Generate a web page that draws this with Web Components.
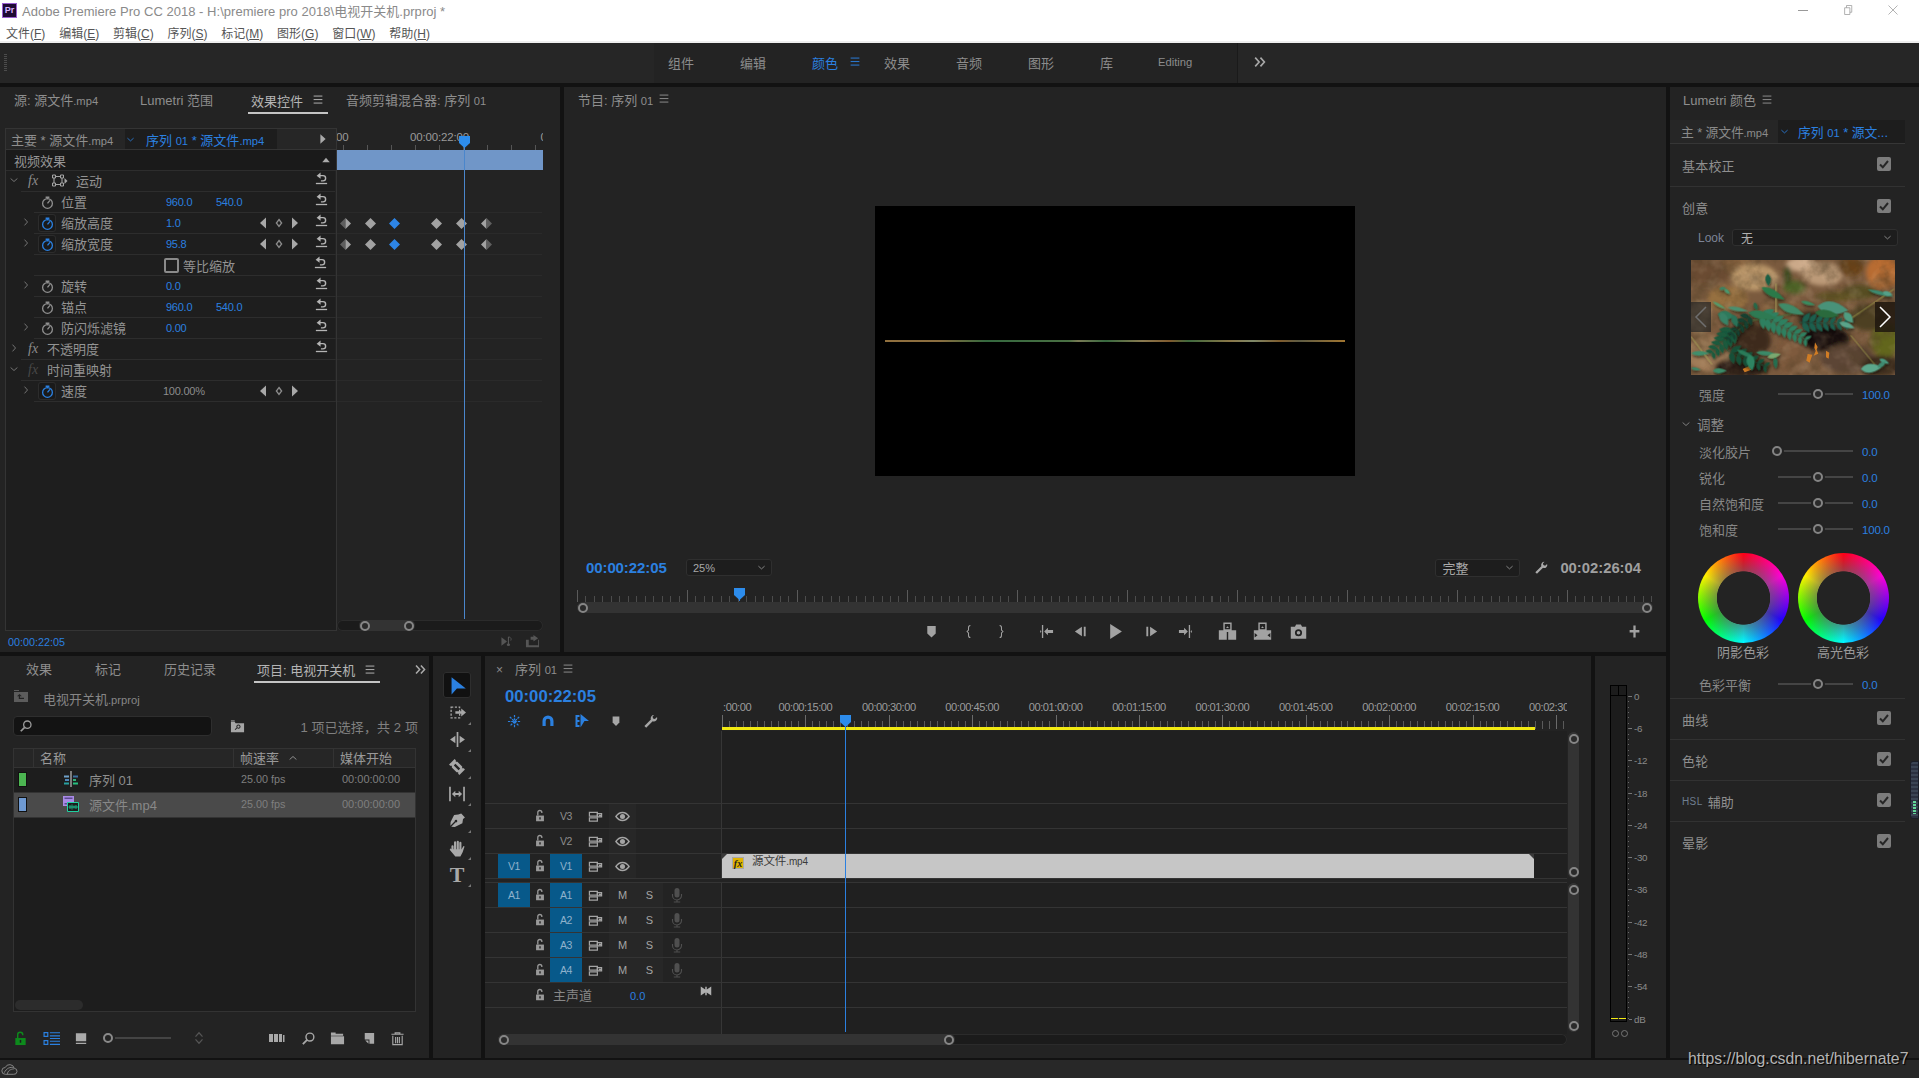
<!doctype html>
<html lang="zh"><head><meta charset="utf-8"><title>Adobe Premiere Pro CC 2018</title>
<style>
html,body{margin:0;height:100%;background:#121212;overflow:hidden;font:13px "Liberation Sans","Noto Sans CJK SC",sans-serif;color:#989898}
</style></head><body><pr-app></pr-app>
<script>
const BLUE='#2b80e0';
const def=(tag,render)=>customElements.define(tag,class extends HTMLElement{
  constructor(){super();this.attachShadow({mode:'open'})}
  connectedCallback(){this.shadowRoot.innerHTML=render(this)}
});
const S='fill="none" stroke="currentColor"';
const sm=s=>`<span style="font-size:11.2px">${s}</span>`;
const ICONS={
 chevR:`<path d="M6 3.5l4 4.5-4 4.5" ${S} stroke-width="1.2"/>`,
 chevD:`<path d="M3.5 6l4.5 4 4.5-4" ${S} stroke-width="1.2"/>`,
 triL:`<path d="M11 2.5v11L5 8z"/>`,triR:`<path d="M5 2.5v11L11 8z"/>`,triU:`<path d="M3 11l5-6 5 6z"/>`,
 dia:`<path d="M8 4l3 4-3 4-3-4z" ${S} stroke-width="1.5"/>`,
 watch:`<circle cx="8" cy="9" r="5.2" ${S} stroke-width="1.4"/><path d="M6 2.4h4M8 2.4v2M8 9l2.6-3.2" ${S} stroke-width="1.4"/>`,
 reset:`<path d="M2.8 6L7 2.6v6.8z"/><path d="M6 6h3.6a2.8 2.8 0 0 1 0 5.6H7.4" ${S} stroke-width="1.5"/><path d="M2 14.4h12" ${S} stroke-width="1.4"/>`,
 xform:`<path d="M3 3.5h8v8H3z" ${S} stroke-width="1.1"/><path d="M1.5 2h3v3h-3zM9.5 2h3v3h-3zM1.5 10h3v3h-3zM9.5 10h3v3h-3z" fill="#232323" stroke="currentColor"/><path d="M13.5 5l3 3-3 3z"/>`,
 marker:`<path d="M3.5 2h9v8l-4.5 4.5L3.5 10z"/>`,
 markIn:`<path d="M10 1.5C8 1.5 8 3 8 4v2.5L6.5 8 8 9.5V12c0 1 0 2.5 2 2.5" ${S} stroke-width="1.1"/>`,
 markOut:`<path d="M6 1.5C8 1.5 8 3 8 4v2.5L9.5 8 8 9.5V12c0 1 0 2.5-2 2.5" ${S} stroke-width="1.1"/>`,
 goOut:`<path d="M1 6.5h5.5V4l4 4-4 4V9.5H1z"/><path d="M11.5 1h1.4v14h-1.4zM13.4 8l1.4-1.6v3.2z"/>`,
 goIn:`<path d="M15 6.5H9.500V4l-4 4 4 4V9.500H15z"/><path d="M4.500 1H3.100v14h1.400zM2.600 8L1.200 6.400v3.200z"/>`,
 stepF:`<path d="M2.500 3h2v10h-2zM6.500 3l7.500 5-7.500 5z"/>`,
 stepB:`<path d="M13.500 3h-2v10h2zM9.500 3L2 8l7.500 5z"/>`,
 play:`<path d="M3 1l11 7-11 7z"/>`,
 insert:`<path fill-rule="evenodd" d="M4.500.5h7v6.500h3.800V15H.7V7h3.800zM5.700 1.700v4.500h4.600V1.700zM7.400 8.400v6.600h1.200V8.400z"/><path d="M6.800 5l1.200-1.400L9.200 5z"/>`,
 over:`<path fill-rule="evenodd" d="M4.500.5h7v6.500h3.800V15H.7V7h3.800zM5.700 1.700v4.500h4.600V1.700zM1.400 9.300v3.800l2.400-1.900zM14.600 9.300v3.800l-2.400-1.900z"/><path d="M6.800 5l1.200-1.400L9.200 5z"/>`,
 camera:`<path fill-rule="evenodd" d="M1.500 4H5l1-2h4l1 2h3.500v10h-13zM8 6a3 3 0 1 0 0 6 3 3 0 0 0 0-6zm0 1.500a1.500 1.500 0 1 1 0 3 1.500 1.500 0 0 1 0-3z"/>`,
 plus:`<path d="M6.800 1.500h2.400V6.500h4V9h-4v5.500H6.800V9h-4V6.500h4z"/>`,
 wrench:`<path d="M11.800 1a3.600 3.600 0 0 0-3.400 4.900L1.500 12.800l1.900 1.900 6.900-6.900A3.600 3.600 0 0 0 15 3.300l-2.300 2-2-.6-.5-2z"/>`,
 select:`<path d="M3 1l12 9.500H7.500L3 15.500z"/>`,
 track:`<path d="M2 3h8v10H2z" ${S} stroke-width="1.2" stroke-dasharray="2 1.500"/><path d="M6 6.800h5.500V4.300L16 8l-4.500 3.700V9.200H6z"/>`,
 ripple:`<path d="M7.200 1h1.600v14H7.200zM1 8l5-3.500v7zM15 8l-5-3.500v7z"/>`,
 razor:`<g transform="rotate(45 8 8)"><path fill-rule="evenodd" d="M1.500 4.500h1.500l1 1 1-1h6l1 1 1-1h1.500v7H13l-1-1-1 1H5l-1-1-1 1H1.500zM5 7v2h6V7z"/></g>`,
 slip:`<path d="M1 1.500h1.500v13H1zM13.500 1.500H15v13h-1.500zM3.500 8L6.500 5.200v2h3v-2L12.500 8l-3 2.800v-2h-3v2z"/>`,
 pen:`<path fill-rule="evenodd" d="M11.500 1.500L15 5.200l-1.800 1.400-.6 4-7.100 3.400-3.400-.1L6.300 9.700a1.200 1.200 0 1 0-.9-.9L1.300 12.900 1.500 9.500l3.300-6.600 4-.5z"/>`,
 hand:`<path d="M4 6.500V10M6.300 3v6.500M8.700 2.500v7M11 3.500v6.500" ${S} stroke-width="1.900" stroke-linecap="round"/><path d="M3.200 9H12l1.800-2.800.9.500-1.700 5L11 15.500H6.500L1.500 9.500l1-1.200z"/>`,
 lockO:`<path d="M3.500 7.500h9V14h-9z"/><path d="M5.500 7.500V4a2.300 2.300 0 0 1 4.600 0v.5" ${S} stroke-width="1.500"/><path d="M7.200 9.500h1.600v2.500H7.200z" fill="#232323"/>`,
 sync:`<path d="M1.500 3.500h8.500v4H1.500zM1.500 9.500h8.500v3.500H1.500z" ${S} stroke-width="1.300"/><path d="M10 5h4.500v3.500H10z" ${S} stroke-width="1.300"/><path d="M11.500 6h2.500v2h-2.500z"/>`,
 eye:`<path d="M1 8c2-3 4.200-4.200 7-4.200S13 5 15 8c-2 3-4.200 4.200-7 4.200S3 11 1 8z" ${S} stroke-width="1.500"/><circle cx="8" cy="8" r="2.700"/>`,
 mic:`<rect x="5.500" y="1" width="5" height="9.500" rx="2.500"/><path d="M3.500 7v1.500a4.500 4.500 0 0 0 9 0V7M8 13v1.500M4.800 15h6.400" ${S} stroke-width="1.100"/>`,
 mix:`<path d="M1 2l6 4V2.200h2V6l6-4v12l-6-4v3.800H7V10l-6 4z"/>`,
 snapNest:`<path d="M8 1v14M3 3l10 10M13 3L3 13M1 8h14" ${S} stroke-width="1.300" stroke-dasharray="2.500 1"/>`,
 magnet:`<path d="M2.500 13V8a5.500 5.500 0 0 1 11 0v5h-3.200V8a2.300 2.300 0 0 0-4.600 0v5z"/>`,
 linked:`<path d="M1.500 2h4v2h-2v3h2v2h-2v3h2v2h-4z"/><path d="M6.500 1L15 8H10.500l-4 6.500z"/>`,
 search:`<circle cx="9.500" cy="6.500" r="4.200" ${S} stroke-width="1.500"/><path d="M6.500 9.500L2 14" ${S} stroke-width="2"/>`,
 binFind:`<path fill-rule="evenodd" d="M1 3h4l1 1.500h9V14H1zM9 6a2.200 2.200 0 0 0-2 3.200L5 11l.8.8 1.900-1.900A2.200 2.200 0 1 0 9 6zm0 1a1.200 1.200 0 1 1 0 2.400A1.200 1.200 0 0 1 9 7z"/><path d="M1 1.500h4V2.500H1z"/>`,
 upbin:`<path d="M1 4h14v10H1z"/><path d="M1 2h5v1H1z"/><path d="M6.500 6L4 8.200h1.800V11H11v-1.200H7V8.200h1.800z" fill="#232323"/>`,
 seq:`<path d="M7.500 0h1v16h-1z" fill="#ddd"/><path d="M1 4.500h5v2H1z" fill="#6ea0c8"/><path d="M10 4.500h5v2h-5z" fill="#3b6fa0"/><path d="M2 8h4v2H2z" fill="#4f86b8"/><path d="M10 8h3v2h-3z" fill="#34b07a"/><path d="M1 11.500h5v2H1z" fill="#28a0a0"/><path d="M10 11.500h5v2h-5z" fill="#27c080"/>`,
 clip:`<path d="M0 0h11v10H0z" fill="#a98ae6"/><path d="M1.500 1.500h8v1.500h-8zM1.500 7h8v1.500h-8z" fill="#5c4a90"/><path d="M4.500 6.500h11v9h-11z" fill="#1d1d1d" stroke="#1fd0a0"/><path d="M7 9v4M9 8.500v5M11 9.500v3M13 9v4M5.500 11h9.500" fill="none" stroke="#1fd0a0" stroke-width=".8"/>`,
 lockG:`<path d="M2.500 7.500h11V15h-11z"/><path d="M5 7.500V4a2.700 2.700 0 0 1 5.400 0v.5" ${S} stroke-width="1.500"/><path d="M7.200 9.500h1.600v3H7.200z" fill="#1d1d1d"/>`,
 list:`<path d="M1 2.500h3.500V6H1zM1 10h3.500v3.500H1z" ${S} stroke-width="1.100"/><path d="M6.500 2.500H16M6.500 5.500H16M6.500 8H16M6.500 10.500H16M6.500 13.500H16" ${S} stroke-width="1"/>`,
 thumbs:`<path d="M2 2.500h11v8.500H2zM2 12.500h11v1.300H2z"/>`,
 sort:`<path d="M4 6.500L8 2l4 4.500M4 9.500L8 14l4-4.500" ${S} stroke-width="1.400"/>`,
 auto:`<path d="M0 4h4v8H0zM5 4h4v8H5zM10 4h3v8h-3zM14 5h1.500v7H14z"/>`,
 bin:`<path d="M1 1.500h5v1.500h8v2H1zM1 5.500h14V14H1z"/>`,
 item:`<path d="M4 2h10v11.500H9V9H4z"/><path d="M4.500 10H8v3.500z"/>`,
 trash:`<path d="M1.500 3.500h13M5.500 3.500V2h5v1.500M3 5v9.500h10V5M6 6.500v6.500M8 6.500v6.500M10 6.500v6.500" ${S} stroke-width="1.200"/>`,
 cloud:`<path d="M4 12.500a3.200 3.200 0 0 1 0-6.400 4.500 4.500 0 0 1 8.500 0.800 2.800 2.800 0 0 1-.5 5.600zM3 11c2-4 6-6 9-4.500M6 12.500c0-3 3-5 6-5" ${S} stroke-width=".9"/>`,
 effOut:`<path d="M1.500 3.500l6 4.500-6 4.500z"/><path d="M9 3v8" ${S} stroke-width="1.200"/><ellipse cx="9" cy="11.500" rx="1.800" ry="1.300"/><path d="M9.500 3c2 .7 3 2 2 4" ${S}/>`,
 export:`<path d="M1 6h3v6h10V6h1v8H1z"/><path d="M6 2h3V0l5 3.500L9 7V5H6z" transform="translate(0 1)"/>`,
 restore:`<path d="M3.500 5h7v9h-7zM6 5V2h7v9h-2.500" ${S} stroke-width="1"/>`,
 closeX:`<path d="M2 2l12 12M14 2L2 14" ${S} stroke-width="1"/>`,
 dbl:`<path d="M2.500 3l4.500 5-4.500 5M8.500 3l4.500 5-4.500 5" ${S} stroke-width="1.900"/>`,
 menu:`<path d="M3 3.500h10M3 7.500h10M3 11.500h10" ${S} stroke-width="1.100"/>`,
};
def('pr-icon',h=>{const s=h.getAttribute('size')||16,c=h.getAttribute('color')||'currentColor';
 return `<style>:host{display:inline-flex;align-items:center;justify-content:center;flex:none;color:${c}}svg{display:block;overflow:visible}</style><svg viewBox="0 0 16 16" width="${s}" height="${s}" fill="currentColor">${ICONS[h.getAttribute('name')]||''}</svg>`});
function spaced(items,start,cell=20){let x=start,out='';items.forEach(([c,html])=>{const w=cell;const m=c-w/2-x;out+=`<span style="flex:none;width:${w}px;margin-left:${m}px;display:flex;justify-content:center;align-items:center">${html}</span>`;x=c+w/2});return out}
const ic=(n,s=16,c='')=>`<pr-icon name="${n}" size="${s}"${c?` color="${c}"`:''}></pr-icon>`;

def('pr-titlebar',()=>`<style>:host{display:block;height:43px;background:#fff;box-sizing:border-box;color:#444}
.t{display:flex;height:20px;margin-bottom:4px;align-items:center}
.logo{width:15px;height:15px;margin:0 5px 0 2px;background:#1f0a33;border:1px solid #9a5fd0;color:#d7b3ff;font:bold 9px/13px "Liberation Sans";text-align:center;box-sizing:border-box}
.n{color:#8a8a8a;font-size:13px;letter-spacing:.03px;margin-top:1px}
.w{margin-left:auto;display:flex;color:#9a9a9a;align-items:center;padding-right:20px;gap:33.500px}
.m{display:flex;height:17px;align-items:center;padding-left:6px;font-size:12px;color:#555;box-shadow:0 2px 0 #eee}
.m span{margin-right:13.800px}u{text-underline-offset:1px}</style>
<div class="t"><div class="logo">Pr</div><div class="n">Adobe Premiere Pro CC 2018 - H:\\premiere pro 2018\\电视开关机.prproj *</div>
<div class="w"><span style="width:10px;height:1px;background:#999"></span><pr-icon name="restore" size="12"></pr-icon><pr-icon name="closeX" size="12"></pr-icon></div></div>
<div class="m"><span>文件(<u>F</u>)</span><span>编辑(<u>E</u>)</span><span>剪辑(<u>C</u>)</span><span>序列(<u>S</u>)</span><span>标记(<u>M</u>)</span><span>图形(<u>G</u>)</span><span>窗口(<u>W</u>)</span><span>帮助(<u>H</u>)</span></div>`);

def('pr-workspaces',()=>{const it=['组件','编辑','颜色','效果','音频','图形','库','Editing'];
return `<style>:host{display:flex;height:40px;background:#262626;align-items:center}
.g{width:3px;height:18px;margin-left:4px;background:repeating-linear-gradient(#4c4c4c 0 1px,transparent 1px 2px)}
.n{margin-left:647px;width:584px;height:40px;background:#232323;display:flex;align-items:center;border-right:1px solid #1a1a1a;color:#8c8c8c;box-sizing:border-box}
.n span{width:72px;flex:none;padding-left:14px;box-sizing:border-box;display:flex;align-items:center;white-space:nowrap;margin-top:-2px}
.n .on{color:${BLUE}}.d{margin-left:15px;color:#a8a8a8}.n .e{font-size:11.200px;padding-left:0}</style>
<div class="g"></div><div class="n">${it.map(t=>`<span class="${t=='颜色'?'on':''} ${t=='Editing'?'e':''}">${t}${t=='颜色'?`<pr-icon name="menu" size="14" style="margin-left:10px"></pr-icon>`:''}</span>`).join('')}</div><div class="d">${ic('dbl',14)}</div>`});

def('pr-tab',h=>{const on=h.hasAttribute('active');return `<style>:host{display:flex;width:${h.getAttribute('w')}px;flex:none;height:100%;align-items:center;white-space:nowrap;color:${on?'#b4b4b4':'#8e8e8e'}}
.i{display:flex;align-items:center;height:25px;padding:0 3px 2px;box-sizing:border-box;${on?'border-bottom:2px solid #c4c4c4;padding-bottom:0;margin-top:2px':''}}
pr-icon{margin-left:${on?8:4}px}</style><div class="i"><span><slot></slot></span>${on||h.hasAttribute('menu')?`<pr-icon name="menu" size="14"></pr-icon>`:''}</div>`});

def('pr-playhead',h=>`<style>:host{display:block;position:absolute;width:11px;pointer-events:none}
.l{position:absolute;left:5px;top:6px;bottom:0;width:1px;background:${h.getAttribute('color')||BLUE}}svg{position:absolute;left:0;top:0;display:block}</style>
<div class="l"></div><svg width="11" height="${h.getAttribute('hh')||12}" viewBox="0 0 11 12"><path d="M0 0h11v7l-5.500 5L0 7z" fill="#2d8ceb"/></svg>`);

def('pr-scroll',h=>{const v=h.getAttribute('dir')=='v',f=h.getAttribute('from')||0,w=h.getAttribute('w')||'100%';
return `<style>:host{display:flex;flex:none;${v?'flex-direction:column;width:11px':'height:11px'};background:#1b1b1b;border-radius:6px;box-shadow:inset 0 0 0 1px #2b2b2b}
.s{flex:none;${v?`height:${f}px`:`width:${f}px`}}
.t{flex:none;${v?`height:${w};width:100%`:`width:${w}${w.includes('%')?'':'px'};height:100%`};background:#333;position:relative;border-radius:6px}
i{position:absolute;width:10px;height:10px;box-sizing:border-box;border:2.500px solid #868686;border-radius:50%;background:#2a2a2a;${v?'left:.5px':'top:.5px'}}
.a{${v?'top:2px':'left:1px'}}.b{${v?'bottom:1px':'right:1px'}}</style><div class="s"></div><div class="t"><i class="a"></i><i class="b"></i></div>`});

def('pr-keyframes',h=>{const P={n:'<path d="M5 0l5 5-5 5-5-5z" fill="#a2a2a2"/>',b:'<path d="M5 0l5 5-5 5-5-5z" fill="#2d85e6"/>',h:'<path d="M5 0v10L0 5z" fill="#5e5e5e"/><path d="M5 0l5 5-5 5z" fill="#a2a2a2"/>',r:'<path d="M5 0v10L0 5z" fill="#a2a2a2"/><path d="M5 0l5 5-5 5z" fill="#5e5e5e"/>'};
return `<style>:host{position:absolute;inset:0;display:block}svg{position:absolute;top:5px}</style>`+h.getAttribute('k').split(',').map(k=>{const [x,t]=k.split(':');return `<svg width="11" height="11" viewBox="0 0 10 10" style="left:${x-5.5}px">${P[t||'n']}</svg>`}).join('')});

def('pr-prop',h=>{const g=n=>h.getAttribute(n),tw=h.hasAttribute('twirl'),act=h.hasAttribute('on'),nav=h.hasAttribute('nav');
return `<style>:host{display:flex;height:21px;flex:none}
.l{width:330px;flex:none;display:flex;align-items:center;height:21px;padding-left:13px;box-sizing:border-box}
.c{border-bottom:1px solid #2d2d2d;display:flex;align-items:center;height:21px;box-sizing:border-box;flex:1}
.tw{width:16px;flex:none;display:flex;justify-content:center;color:#7d7d7d;margin-top:-3px}
.sw{margin-left:4px;width:18px;height:18px;flex:none;display:flex;align-items:center;justify-content:center;color:#8f8f8f;${act?`color:${BLUE};background:#1a1a1a;border-radius:3px;box-shadow:inset 0 0 0 1px #2c2c2c;`:''}margin-right:5px}
.n{width:105px;flex:none;color:#939393;white-space:nowrap;margin-top:-1px}
.v{flex:none;font-size:11px;letter-spacing:-.25px;color:${BLUE}}.v1{width:50px}.v2{width:39px}
.nav{width:48px;display:flex;flex:none;color:#a8a8a8}.nav pr-icon{width:16px}
.r{margin-left:10.500px;width:17px;flex:none;color:#b4b4b4;margin-top:-4px}
.rc{width:207px;flex:none;position:relative;border-bottom:1px solid #2a2a2a;box-sizing:border-box;height:21px;background:#232323}
.bx{display:flex;align-items:center;margin-left:-1px;color:#939393;font-size:13px;white-space:nowrap}.bx i{width:11px;height:11px;border:2px solid #8a8a8a;border-radius:2px;margin-right:4px;margin-left:-1px}</style>
<div class="l"><div class="tw">${tw?ic('chevR',12):''}</div><div class="c">
<div class="sw">${g('label')?ic('watch',15):''}</div><div class="n">${g('label')||''}</div>
${g('check')?`<div class="bx" style="width:89px"><i></i>${g('check')}</div>`:`<div class="v v1" ${g('gray')!==null?'style="color:#8c8c8c;margin-left:-3px;width:53px"':''}>${g('v1')||''}</div><div class="v v2">${g('v2')||''}</div>`}
<div class="nav">${nav?ic('triL',16)+ic('dia',14,'#8c8c8c')+ic('triR',16):''}</div>
${g('noreset')===null?`<div class="r">${ic('reset',15)}</div>`:'<div class="r"></div>'}</div></div>
<div class="rc"><slot></slot></div>`});

def('pr-effect',h=>{const g=n=>h.getAttribute(n),open=h.hasAttribute('open'),dim=h.hasAttribute('dim');
return `<style>:host{display:flex;height:21px;flex:none}
.l{width:330px;flex:none;display:flex;align-items:center;height:21px;padding-left:1px;box-sizing:border-box}
.tw{width:15px;flex:none;display:flex;justify-content:center;color:#7d7d7d;margin-top:-3px}
.c{flex:1;display:flex;align-items:center;height:21px;border-bottom:1px solid #2d2d2d;box-sizing:border-box}
.fx{width:26px;flex:none;padding-left:7px;box-sizing:border-box;font:italic 14px "Liberation Serif",serif;color:${dim?'#484848':'#8c8c8c'}}
.n{color:#939393;white-space:nowrap;flex:1;margin-top:-1px}.r{width:17px;flex:none;margin-right:4px;color:#b4b4b4;margin-top:-4px}
.ic{display:flex;margin:0 9px 0 4px;color:#a4a4a4}
.rc{width:207px;flex:none;border-bottom:1px solid ${h.hasAttribute('noline')?'transparent':'#2a2a2a'};box-sizing:border-box;height:21px;background:#232323}</style>
<div class="l"><div class="tw">${ic(open?'chevD':'chevR',12)}</div><div class="c"><div class="fx">fx</div>${h.hasAttribute('xform')?`<div class="ic">${ic('xform',16)}</div>`:''}<div class="n">${g('label')}</div>${h.hasAttribute('noreset')?'':`<div class="r">${ic('reset',15)}</div>`}</div></div><div class="rc"></div>`});

def('pr-effect-controls',()=>`<style>:host{display:flex;flex-direction:column;width:560px;flex:none;background:#232323}
.tabs{height:26px;display:flex;padding-left:11px;flex:none}
.f{margin:15px 17px 0 5px;flex:1;position:relative;display:flex;flex-direction:column;min-height:0;background:linear-gradient(90deg,#1e1e1e 0 331px,#232323 331px)}
.f:before{content:"";position:absolute;left:0;top:0;bottom:0;width:330px;border:1px solid #343434;pointer-events:none;z-index:2}
.h1{display:flex;height:22px;flex:none}
.hl{width:331px;flex:none;display:flex;align-items:center;background:#262626;box-sizing:border-box;padding-left:6px;border-top:1px solid #343434;border-bottom:1px solid #343434;white-space:nowrap;color:#8e8e8e}
.hl span.t{margin-top:-2px}
.hl .a{width:114px;flex:none}.hl .b{display:flex;align-items:center;background:#1d1d1d;height:20px;width:152px;flex:none;color:${BLUE}}
.hr{flex:1;position:relative;font-size:11.500px;letter-spacing:-.15px;color:#9a9a9a;display:flex;justify-content:space-between;padding-top:3px;overflow:hidden;background:repeating-linear-gradient(90deg,#555 0 1px,transparent 1px 24px) 7px 100%/100% 5px no-repeat}
.hr span:nth-child(2){margin-left:-10px}.hr span:last-child{margin-right:-10px}
.h2{display:flex;height:21px;flex:none}
.h2l{width:331px;flex:none;background:#1a1a1a;display:flex;align-items:center;padding-left:9px;box-sizing:border-box;border-bottom:1px solid #2d2d2d;color:#969696}
.h2l pr-icon{margin-left:auto;margin-right:4px;color:#aaa}
.h2r{flex:1;background:#7096c8;margin-bottom:1px}
.rows{display:flex;flex-direction:column;flex:1}
.sb{position:absolute;left:332px;right:0;bottom:0}
.foot{height:21px;display:flex;align-items:center;padding-left:8px;flex:none;font-size:10.800px;color:${BLUE};padding-right:20px}
.foot pr-icon{color:#555}</style>
<div class="tabs"><pr-tab w="126">源: 源文件${sm('.mp4')}</pr-tab><pr-tab w="111">Lumetri 范围</pr-tab><pr-tab w="95" active>效果控件</pr-tab><pr-tab w="180">音频剪辑混合器: 序列 ${sm('01')}</pr-tab></div>
<div class="f">
 <div class="h1"><div class="hl"><div class="a"><span class="t">主要 * 源文件${sm('.mp4')}</span></div><div class="b">${ic('chevD',11)}<span style="margin-left:10px">序列 ${sm('01')} * 源文件${sm('.mp4')}</span></div><pr-icon name="triR" size="14" color="#aaa" style="margin-left:39px"></pr-icon></div><div class="hr"><span>00</span><span>00:00:22:00</span><span>00</span></div></div>
 <div class="h2"><div class="h2l">视频效果<pr-icon name="triU" size="12"></pr-icon></div><div class="h2r"></div></div>
 <div class="rows">
 <pr-effect label="运动" open xform noline></pr-effect>
 <pr-prop label="位置" v1="960.0" v2="540.0"></pr-prop>
 <pr-prop label="缩放高度" v1="1.0" twirl on nav><pr-keyframes k="10:h,35,59:b,101.500,126.500,151:r"></pr-keyframes></pr-prop>
 <pr-prop label="缩放宽度" v1="95.8" twirl on nav><pr-keyframes k="10:h,35,59:b,101.500,126.500,151:r"></pr-keyframes></pr-prop>
 <pr-prop check="等比缩放"></pr-prop>
 <pr-prop label="旋转" v1="0.0" twirl></pr-prop>
 <pr-prop label="锚点" v1="960.0" v2="540.0"></pr-prop>
 <pr-prop label="防闪烁滤镜" v1="0.00" twirl></pr-prop>
 <pr-effect label="不透明度"></pr-effect>
 <pr-effect label="时间重映射" open dim noreset></pr-effect>
 <pr-prop label="速度" v1="100.00%" gray twirl on nav noreset></pr-prop>
 </div>
 <pr-scroll class="sb" from="22" w="56"></pr-scroll>
 <pr-playhead color="#4a86cc" style="left:454px;top:8px;bottom:12px"></pr-playhead>
</div>
<div class="foot">00:00:22:05<span style="flex:1"></span>${ic('effOut',15)}<span style="width:10px"></span>${ic('export',15)}</div>`);

def('pr-select',h=>`<style>:host{display:flex;align-items:center;width:${h.getAttribute('w')}px;height:${h.getAttribute('h')||17}px;background:#1d1d1d;border:1px solid #2f2f2f;border-radius:3px;box-sizing:border-box;padding:0 4px 0 ${h.getAttribute('pad')||6}px;flex:none;color:#a8a8a8}
pr-icon{margin-left:auto;color:#999}</style><slot></slot>${ic('chevD',11)}`);

def('pr-program',()=>{
const btns=[[931,'marker'],[968,'markIn'],[1001,'markOut'],[1046,'goIn'],[1080,'stepB'],[1115,'play'],[1151,'stepF'],[1185,'goOut'],[1227,'insert'],[1262,'over'],[1298,'camera'],[1634,'plus']];
return `<style>:host{display:flex;flex-direction:column;flex:1;background:#232323;min-width:0}
.tabs{height:26px;display:flex;padding-left:11px;flex:none}
.v{width:480px;height:270px;background:#000;align-self:center;margin-top:93px;display:flex;flex-direction:column;justify-content:center;flex:none}
.v i{display:block;height:2px;margin:0 10px;background:linear-gradient(90deg,#91703e,#8a6e40 12%,#35693f 22%,#4a7043 40%,#7a7a55 42%,#37693f 48%,#8a7a50 56%,#7f5a2e 62%,#3f6a3e 66%,#8a7748 75%,#7e8868 80%,#7f5c2d 86%,#5e5c44 90%,#a07530)}
.c{display:flex;align-items:center;height:17px;margin-top:83px;padding:0 25px 0 22px;flex:none}
.tc{width:100px;flex:none;color:${BLUE};font-weight:bold;font-size:15px;letter-spacing:-.1px}
.e{color:#a0a0a0;font-weight:bold;font-size:14.800px;margin-left:12px}
.w{margin-left:14px;color:#aaa;width:14px}
.r{height:14px;margin:12px 13px 0;flex:none;position:relative;background:repeating-linear-gradient(90deg,#5a5a5a 0 1px,transparent 1px 110px) 0 2px/100% 12px no-repeat,repeating-linear-gradient(90deg,#4c4c4c 0 1px,transparent 1px 8.460px) 0 8px/100% 6px no-repeat}
.s{margin:0 13px;flex:none}
.b{display:flex;align-items:center;height:24px;margin-top:6px;color:#a2a2a2}</style>
<div class="tabs"><pr-tab w="200" menu>节目: 序列 ${sm('01')}</pr-tab></div>
<div class="v"><i></i></div>
<div class="c"><div class="tc">00:00:22:05</div><pr-select w="86" h="17"><span style="font-size:11px">25%</span></pr-select><span style="flex:1"></span><pr-select w="85" h="18"><span>完整</span></pr-select><pr-icon class="w" name="wrench" size="14"></pr-icon><div class="e">00:02:26:04</div></div>
<div class="r"><pr-playhead style="left:156.500px;top:0;height:13px" hh="12"></pr-playhead></div>
<pr-scroll class="s"></pr-scroll>
<div class="b">${spaced(btns.map(([c,n])=>[c,ic(n,n=='play'?17:n=='insert'||n=='over'||n=='camera'?19:15)]),564)}</div>`});

def('pr-tools',()=>{const T=[['select',19,BLUE],['track',17],['ripple',17],['razor',18],['slip',18],['pen',17],['hand',18],['T',0]];
return `<style>:host{display:flex;flex-direction:column;width:48px;flex:none;background:#232323;padding-top:16px;box-sizing:border-box;color:#a8a8a8}
.t{height:27px;display:flex;justify-content:center;align-items:center;position:relative;flex:none}
.t:after{content:"";position:absolute;right:10px;bottom:1px;border:solid transparent;border-width:0 0 3px 3px;border-bottom-color:#777}
.t.on{background:#111;border-radius:3px;margin:0 10px;height:26px;margin-bottom:1px;box-shadow:inset 0 0 0 1px #2e2e2e}.t.on:after{display:none}
.x{font:bold 22px/1 "Liberation Serif",serif;color:#a8a8a8}</style>${T.map(([n,s,c],i)=>`<div class="t ${i==0?'on':''}">${n=='T'?'<span class="x">T</span>':ic(n,s,c||'')}</div>`).join('')}`});

def('pr-track',h=>{const g=n=>h.getAttribute(n),A=h.hasAttribute('audio'),M=h.hasAttribute('master');
const p=(t,on)=>`<div class="p ${on?'on':''}">${t}</div>`;
return `<style>:host{display:flex;height:25px;flex:none;box-sizing:border-box}
.hd{width:237px;flex:none;display:flex;align-items:center;box-sizing:border-box;border-right:1px solid #363636;border-bottom:1px solid #343434;padding-left:13px;background:#232323;color:#a0a0a0}
.p{width:32px;height:24px;flex:none;display:flex;align-items:center;justify-content:center;font-size:10.500px;color:#8e8e8e;letter-spacing:-.3px}
.p.on{background:#07598a;color:#8fb2cc}
.l{width:20px;flex:none;display:flex;justify-content:center;color:#999}
.i{width:27px;height:24px;flex:none;display:flex;justify-content:center;align-items:center;color:#a4a4a4;font-size:11px}
.i.d{background:#272727}.m{color:#4f4f4f}
.lane{flex:1;border-bottom:1px solid #343434;box-sizing:border-box;background:#202020;min-width:0;display:flex}
.clip{width:812px;height:24px;flex:none;background:#c6c6c6;position:relative;color:#3a3a3a;display:flex;align-items:flex-start;padding-left:10px;box-sizing:border-box}
.clip:before{content:"";position:absolute;left:0;top:0;width:0;height:0;border-top:5px solid #3a3a3a;border-right:5px solid transparent}
.clip:after{content:"";position:absolute;right:0;top:0;width:0;height:0;border-top:5px solid #3a3a3a;border-left:5px solid transparent}
.fx{width:12px;height:12px;background:#e1b400;border:1px solid #a8a8a8;font:italic bold 10px/11px "Liberation Serif",serif;text-align:center;color:#222;margin:3px 8px 0 0;flex:none;box-sizing:border-box}
.cn{line-height:14px;font-size:11.500px;white-space:nowrap;letter-spacing:-.1px}
.mn{color:#888;white-space:nowrap;width:62px;flex:none;margin-left:3px;font-size:13px;margin-top:-1px}
.mv{color:${BLUE};font-size:11px;width:70px;flex:none;margin-top:2px}</style>
<div class="hd">${M?`<div class="p"></div><div class="l">${ic('lockO',14)}</div><div class="mn">主声道</div><div class="mv" style="margin-left:15px">0.0</div><pr-icon name="mix" size="12" color="#b0b0b0" style="margin-top:-8px"></pr-icon>`:
`${p(g('src')||'',!!g('src'))}<div class="l">${ic('lockO',14)}</div>${p(g('name'),A||h.hasAttribute('target'))}<div class="i">${ic('sync',15)}</div>${A?`<div class="i d">M</div><div class="i d">S</div><div class="i m">${ic('mic',16)}</div>`:`<div class="i d">${ic('eye',15)}</div>`}`}</div>
<div class="lane">${h.hasAttribute('clip')?`<div class="clip"><span class="fx">fx</span><span class="cn">源文件<span style="font-size:10px">.mp4</span></span></div>`:''}</div>`});

def('pr-timeline',()=>{
const L=[':00:00','00:00:15:00','00:00:30:00','00:00:45:00','00:01:00:00','00:01:15:00','00:01:30:00','00:01:45:00','00:02:00:00','00:02:15:00','00:02:30:00'];
return `<style>:host{display:flex;flex-direction:column;flex:1;min-width:0;background:#232323;position:relative}
.tabs{height:27px;display:flex;align-items:center;padding-left:11px;flex:none;color:#a6a6a6}
.x{width:13px;color:#8a8a8a;font-size:12px;margin-right:3px}
.head{display:flex;height:48px;flex:none}
.hl{width:237px;flex:none;padding-left:20px;box-sizing:border-box}
.tc{color:${BLUE};font-weight:bold;font-size:16.700px;line-height:18px;margin-top:5px}
.ti{display:flex;align-items:center;height:22px;margin-top:4px}
.ru{width:845px;flex:none;position:relative;height:48px;overflow:hidden;background:repeating-linear-gradient(90deg,#6a6a6a 0 1px,transparent 1px 83.400px) 0 32px/100% 14px no-repeat,repeating-linear-gradient(90deg,#5a5a5a 0 1px,transparent 1px 6.950px) 0 38px/100% 8px no-repeat}
.lb{display:flex;margin-left:-41.700px;font-size:11.100px;letter-spacing:-.45px;color:#9c9c9c;padding-top:18px;width:1000px}
.lb span{width:83.400px;flex:none;text-align:center;white-space:nowrap}.lb span:first-child{text-align:right;padding-right:12.500px;box-sizing:border-box}
.y{position:absolute;left:0;top:44px;width:813px;height:2.500px;background:#f2ea12}
.body{flex:1;display:flex;min-height:0}
.tr{width:1082px;flex:none;display:flex;flex-direction:column}
.sp{display:flex;height:73px;flex:none}.sp .a,.end .a{width:237px;border-right:1px solid #363636;box-sizing:border-box;flex:none}.sp .a{border-bottom:1px solid #343434}
.sp .b{flex:1;border-bottom:1px solid #343434;background:#202020}
.gap{display:flex;height:4px;flex:none;border-bottom:1px solid #343434;box-sizing:border-box;background:#232323}
.end{display:flex;flex:1}.end .b{flex:1;background:#202020}
.vs{width:11px;flex:none;margin-left:1px;display:flex;flex-direction:column;gap:5px;padding-top:1px}
.bt{display:flex;height:24px;flex:none;padding:0 0 13px 13px;box-sizing:border-box}
.bt pr-scroll{width:1069px}</style>
<div class="tabs"><span class="x">×</span><pr-tab w="80" menu>序列 ${sm('01')}</pr-tab></div>
<div class="head"><div class="hl"><div class="tc">00:00:22:05</div><div class="ti" style="margin-left:-20px;color:${BLUE}">${spaced([[29,ic('snapNest',15)],[63,ic('magnet',16)],[97,ic('linked',16)],[131,ic('marker',12,'#a6a6a6')],[165,ic('wrench',15,'#a6a6a6')]],0)}</div></div>
<div class="ru"><div class="lb">${L.map(t=>`<span>${t}</span>`).join('')}</div><div class="y"></div></div></div>
<div class="body"><div class="tr"><div class="sp"><div class="a"></div><div class="b"></div></div>
<pr-track name="V3"></pr-track><pr-track name="V2"></pr-track><pr-track name="V1" src="V1" target clip></pr-track><div class="gap"></div>
<pr-track audio name="A1" src="A1"></pr-track><pr-track audio name="A2"></pr-track><pr-track audio name="A3"></pr-track><pr-track audio name="A4"></pr-track><pr-track master></pr-track>
<div class="end"><div class="a"></div><div class="b"></div></div></div>
<div class="vs"><pr-scroll dir="v" style="height:146px"></pr-scroll><pr-scroll dir="v" style="height:149px"></pr-scroll></div></div>
<div class="bt"><pr-scroll w="457"></pr-scroll></div>
<pr-playhead style="left:355px;top:59px;height:317px"></pr-playhead>`});

def('pr-meter',()=>{const L=['0','-6','-12','-18','-24','-30','-36','-42','-48','-54','dB'];
return `<style>:host{display:flex;flex-direction:column;width:71px;flex:none;background:#232323;padding:29px 0 0 15px;box-sizing:border-box}
.r{display:flex;height:337px;flex:none}
.b{width:17px;flex:none;border:1px solid #000;background:#1c1c1c;box-sizing:border-box;display:flex;flex-direction:column}
.top{height:9px;border-bottom:1px solid #000;display:flex;flex:none}.top i{flex:1}.top i:first-child{border-right:1px solid #000}
.yl{margin-top:auto;height:1.500px;margin-bottom:2px;background:linear-gradient(90deg,#f2ea12 0 45%,#333 45% 55%,#f2ea12 55%)}
.tk{width:5px;flex:none;background:repeating-linear-gradient(#6a6a6a 0 1px,transparent 1px 5.370px) 1px 11px/1px 100% no-repeat}
.lb{display:flex;flex-direction:column;margin-top:-5px;font-size:9.800px;color:#8a8a8a;letter-spacing:-.3px}
.lb span{height:32.300px;flex:none;display:flex;align-items:center;white-space:nowrap;margin-left:-3px}
.lb span:before{content:"";width:3px;height:1px;background:#777;margin-right:2px}
.oo{display:flex;gap:2px;margin:8px 0 0 2px}.oo i{width:5px;height:5px;border:1px solid #777;border-radius:50%}</style>
<div class="r"><div class="b"><div class="top"><i></i><i></i></div><div class="yl"></div></div><div class="tk"></div><div class="lb">${L.map(t=>`<span>${t}</span>`).join('')}</div></div><div class="oo"><i></i><i></i></div>`});

def('pr-bin-row',h=>{const sel=h.hasAttribute('selected');return `<style>:host{display:grid;grid-template-columns:20px 200px 100px 1fr;height:25px;flex:none;align-items:center;background:${sel?'#4a4a4a':'#1d1d1d'};box-sizing:border-box;border-bottom:1px solid #333;color:#7f7f7f;font-size:10.800px}
.sw{width:7px;height:13px;background:${h.getAttribute('color')};border:1px solid #111;margin-left:4px;margin-top:-2px}
.n{display:flex;align-items:center;font-size:13px;color:${sel?'#888':'#8e8e8e'};padding-left:29px;white-space:nowrap;margin-top:-2px}.n pr-icon{margin-right:10px}
.f{padding-left:7px;margin-top:-2px}.t{padding-left:8px;font-size:11px;margin-top:-3px}</style>
<div class="sw"></div><div class="n">${ic(h.getAttribute('icon'),16)}<span>${h.getAttribute('label')}</span></div><div class="f">25.00 fps</div><div class="t">00:00:00:00</div>`});

def('pr-project',()=>{
const F=[[20,ic('lockG',15,'#0d8a1c')],[51,ic('list',17,BLUE)],[81,ic('thumbs',15,'#aaa')]];
const G=[[199,ic('sort',14,'#555')],[277,ic('auto',16,'#a8a8a8')],[308,ic('search',15,'#a8a8a8')],[337,ic('bin',15,'#a8a8a8')],[368,ic('item',15,'#a8a8a8')],[397,ic('trash',15,'#a8a8a8')]];
return `<style>:host{display:flex;flex-direction:column;width:429px;flex:none;background:#232323}
.tabs{height:27px;display:flex;padding-left:23px;flex:none}
.d{margin-left:2px;color:#aaa;display:flex;align-items:center}
.pa{height:29px;display:flex;align-items:center;padding-left:13px;flex:none;color:#868686}
.pa .tx{margin-top:2px}
.pa span.ic{width:30px;flex:none;color:#5c5c5c}
.se{display:flex;align-items:center;height:20px;margin-top:4px;padding-left:13px;flex:none}
.sb{width:199px;height:20px;flex:none;background:#131313;border:1px solid #2e2e2e;border-radius:4px;box-sizing:border-box;display:flex;align-items:center;padding-left:5px;color:#9a9a9a}
.cnt{margin-left:auto;margin-right:11px;color:#808080;white-space:nowrap;letter-spacing:.1px}
.tb{margin:12px 0 0 13px;width:403px;height:264px;flex:none;border:1px solid #333;box-sizing:border-box;background:#1d1d1d;display:flex;flex-direction:column;position:relative}
.th{display:grid;grid-template-columns:20px 200px 100px 1fr;height:19px;flex:none;background:#262626;border-bottom:1px solid #333;color:#999;box-sizing:border-box;align-items:center}
.th div{height:100%;border-right:1px solid #333;display:flex;align-items:center;padding-left:6px;box-sizing:border-box;white-space:nowrap;margin-top:-1px}.th div:last-child{border:0}
.thumb{margin:auto 0 1px 1px;width:68px;height:10px;background:#2c2c2c;border-radius:5px;flex:none}
.ft{height:40px;flex:none;display:flex;align-items:center;margin-top:6px;color:#aaa}
.sl{width:68px;flex:none;display:flex;align-items:center;margin-left:12px}.sl i{width:10px;height:10px;box-sizing:border-box;border:2.500px solid #8a8a8a;border-radius:50%;flex:none}.sl b{flex:1;height:2px;background:#444;margin-left:2px}</style>
<div class="tabs"><pr-tab w="69">效果</pr-tab><pr-tab w="69">标记</pr-tab><pr-tab w="93">历史记录</pr-tab><pr-tab w="158" active>项目: 电视开关机</pr-tab><span class="d">${ic('dbl',13)}</span></div>
<div class="pa"><span class="ic">${ic('upbin',16)}</span><span class="tx">电视开关机${sm('.prproj')}</span></div>
<div class="se"><div class="sb">${ic('search',14)}</div><pr-icon name="binFind" size="15" color="#a6a6a6" style="margin-left:18px"></pr-icon><div class="cnt">1 项已选择，共 2 项</div></div>
<div class="tb"><div class="th"><div></div><div>名称</div><div>帧速率<pr-icon name="chevD" size="12" style="transform:scaleY(-1);margin-left:8px"></pr-icon></div><div>媒体开始</div></div>
<pr-bin-row color="#4cb551" icon="seq" label="序列 01"></pr-bin-row><pr-bin-row selected color="#6f9ad2" icon="clip" label="源文件.mp4"></pr-bin-row><div class="thumb"></div></div>
<div class="ft">${spaced(F,0)}<div class="sl"><i></i><b></b></div>${spaced(G,171)}</div>`});

def('pr-check',()=>`<style>:host{display:block;width:14px;height:14px;flex:none}svg{display:block}</style><svg width="14" height="14" viewBox="0 0 14 14"><rect width="14" height="14" rx="2" fill="#7c7c7c"/><path d="M3 7.500l2.800 2.800L11 4" fill="none" stroke="#262626" stroke-width="2"/></svg>`);

def('pr-lsec',h=>`<style>:host{display:flex;align-items:center;height:${h.getAttribute('h')||41}px;box-sizing:border-box;padding-left:12px;${h.hasAttribute('noline')?'':'border-bottom:1px solid #323232;'}margin-right:14px;flex:none;color:#8f8f8f;letter-spacing:.2px}
pr-check{margin-left:auto;margin-right:14px;margin-top:-3px}
.h{font-size:10px;color:#6f7f90;letter-spacing:.4px;margin-right:5px}</style>${h.hasAttribute('hsl')?'<span class="h">HSL</span>':''}<slot></slot><pr-check></pr-check>`);

def('pr-lslider',h=>{const g=n=>h.getAttribute(n),p=g('pos')||53;return `<style>:host{display:flex;align-items:center;height:26px;padding-left:29px;flex:none;color:#878787}
.n{width:79px;flex:none;white-space:nowrap}
.t{width:75px;height:2px;background:#454545;position:relative;flex:none}
.t i{position:absolute;left:${p}%;top:1px;transform:translate(-50%,-50%);width:10px;height:10px;box-sizing:border-box;border:2.500px solid #848484;border-radius:50%;background:#2a2a2a;box-shadow:0 0 0 2px #232323}
.v{margin-left:9px;color:${BLUE};font-size:11.500px;letter-spacing:-.2px;margin-top:2px}</style><div class="n">${g('label')}</div><div class="t"><i></i></div><div class="v">${g('value')}</div>`});

def('pr-wheel',h=>`<style>:host{display:flex;flex-direction:column;align-items:center;width:100px;flex:none;color:#999}
.w{width:91px;height:90px;border-radius:50%;background:radial-gradient(circle,#232323 0 26.300px,rgba(96,96,96,.6) 27px,rgba(96,96,96,0) 44px),conic-gradient(#ff0018,#ff00d8 60deg,#2000ff 120deg,#00f8ff 180deg,#00ff00 240deg,#fff000 300deg,#ff0018);flex:none}
span{margin-top:1px;line-height:18px}</style><div class="w"></div><span>${h.getAttribute('label')}</span>`);

def('pr-look',()=>{
 const leaf=(x,y,a,l,w,c)=>`<path d="M0 0Q${l*.35} ${-w*1.6} ${l} 0Q${l*.35} ${w*1.6} 0 0z" transform="translate(${x} ${y}) rotate(${a})" fill="${c}"/>`;
 const fern=(x0,y0,x1,y1,n,l,c)=>{let o=`<path d="M${x0} ${y0}L${x1} ${y1}" stroke="${c}" stroke-width="2"/>`;const ang=Math.atan2(y1-y0,x1-x0)*180/Math.PI;for(let i=0;i<n;i++){const t=(i+.5)/n,x=x0+(x1-x0)*t,y=y0+(y1-y0)*t,k=1-t*.5;o+=leaf(x,y,ang+55,l*k,l*.3*k,c)+leaf(x,y,ang-55,l*k,l*.3*k,c)}return o};
 const blobs=[[40,40,80,45,'#6a4c30'],[150,25,50,30,'#85603c'],[190,60,70,40,'#b89468'],[110,125,60,40,'#96703f'],[330,22,45,22,'#caa888'],[395,50,60,35,'#bc9a78'],[310,90,34,20,'#4d6426'],[290,55,10,30,'#34481e'],[480,30,36,28,'#6c4218'],[575,45,50,50,'#b86c30'],[505,105,50,22,'#564e20'],[435,118,60,14,'#5f5224'],[585,250,46,50,'#62661e'],[530,180,55,40,'#4e4020'],[55,290,70,55,'#a07c58'],[25,180,35,50,'#b08e66'],[170,250,70,55,'#3e2a1a'],[150,330,80,30,'#2a1e14'],[300,290,48,65,'#7e5a3e'],[405,245,70,40,'#140e08'],[470,305,80,45,'#5b4434'],[270,160,60,30,'#84603e'],[570,325,60,30,'#3a2c1e'],[360,185,40,25,'#3a2a1a']];
 let L='';
 L+=`<g fill="none" stroke-linecap="round"><path d="M0 238L62 320" stroke="#a7a458" stroke-width="2.500"/><path d="M470 190L608 96M480 235L550 320" stroke="#a8a84e" stroke-width="2"/><path d="M255 80V170" stroke="#b0a860" stroke-width="2.500"/><path d="M100 250L180 190L300 170" stroke="#3d6a3a" stroke-width="2"/></g>`;
 L+=fern(130,215,60,290,6,42,'#1a5a3e')+fern(110,280,230,330,6,38,'#185038')+fern(180,170,110,250,6,30,'#134030');
 L+=fern(205,170,350,250,9,42,'#2f8060')+fern(325,195,470,200,7,38,'#1b5e4e');
 L+=leaf(80,170,10,50,16,'#2e7a5c')+leaf(88,165,60,45,14,'#388266')+leaf(125,172,70,40,12,'#2a7258')+leaf(65,133,30,45,5,'#569a6a')+leaf(110,150,10,62,7,'#4a9070')+leaf(85,95,-10,20,6,'#388464')+leaf(100,95,40,22,6,'#48986e');
 L+=leaf(212,90,28,78,13,'#2b7a4a')+leaf(230,50,85,36,10,'#1a5f44')+leaf(262,140,22,84,15,'#3f8a68')+leaf(330,132,15,44,6,'#3a8a60')+leaf(172,165,12,85,15,'#2e7a52')+leaf(190,135,70,25,7,'#266848');
 L+=leaf(380,146,8,92,24,'#4a9279')+leaf(372,165,8,72,15,'#2a6a3c')+leaf(460,165,50,40,14,'#4f9c80')+leaf(445,195,20,48,10,'#5aa48a')+leaf(530,97,15,80,7,'#3c8a70')+leaf(575,105,15,30,8,'#55a088');
 L+=leaf(0,288,0,55,8,'#3f8e6c')+leaf(0,332,10,30,5,'#3a8868')+leaf(65,340,0,42,10,'#3a8a68')+leaf(138,278,25,60,8,'#2a7a58')+leaf(175,292,80,48,15,'#2e8462')+leaf(195,285,5,60,8,'#3a8a68')+leaf(230,300,-15,40,9,'#7aa870')+leaf(252,300,85,34,8,'#256e50');
 L+=leaf(510,335,-5,62,16,'#5ba78c')+leaf(565,305,25,32,7,'#4a9a80')+leaf(560,330,-35,30,8,'#3f8a70');
 const O=`<g fill="#d07c24"><path d="M372 255l8 14-3 8 5 12-14 6 6-14-4-10zM350 290l14 2-8 24-10-6zM405 280l10 6-2 18-8-4zM155 335l20-10 6 12-20 8z"/></g>`;
 return `<style>:host{display:block;width:204px;height:115px;position:relative;flex:none;overflow:hidden;background:#6a4e36}
svg{display:block}.a{position:absolute;top:42px;width:20px;height:30px;display:flex;align-items:center;justify-content:center}
.p{left:0;background:rgba(35,35,35,.72);color:#6e6e6e}.n{right:0;background:rgba(30,22,14,.85);color:#fff}</style>
<svg viewBox="0 8 612 345" width="204" height="115" preserveAspectRatio="none"><defs>
<filter id="b" x="-20%" y="-20%" width="140%" height="140%"><feGaussianBlur stdDeviation="7"/></filter>
<filter id="c" x="-10%" y="-10%" width="120%" height="120%"><feDropShadow dx="2" dy="5" stdDeviation="4" flood-color="#0c0804" flood-opacity=".7"/><feGaussianBlur stdDeviation=".6"/></filter>
<filter id="n" x="0" y="0" width="100%" height="100%"><feTurbulence type="fractalNoise" baseFrequency=".018" numOctaves="4" seed="7"/><feColorMatrix values="0 0 0 0 .08  0 0 0 0 .05  0 0 0 0 .02  1.700 0 0 0 -.72"/></filter>
<filter id="m" x="0" y="0" width="100%" height="100%"><feTurbulence type="fractalNoise" baseFrequency=".022" numOctaves="3" seed="23"/><feColorMatrix values="0 0 0 0 .80  0 0 0 0 .60  0 0 0 0 .40  0 1.700 0 0 -.8"/></filter>
</defs><rect y="0" width="612" height="360" fill="#7a5a3e"/><g filter="url(#b)">${blobs.map(([x,y,a,b,c])=>`<ellipse cx="${x}" cy="${y}" rx="${a}" ry="${b}" fill="${c}"/>`).join('')}</g>
<rect y="0" width="612" height="360" filter="url(#n)" opacity=".7"/><rect y="0" width="612" height="360" filter="url(#m)" opacity=".25"/>${O}<g filter="url(#c)">${L}</g></svg>
<div class="a p"><svg width="14" height="22" viewBox="0 0 14 22"><path d="M12 1L2 11l10 10" fill="none" stroke="currentColor" stroke-width="1.500"/></svg></div>
<div class="a n"><svg width="14" height="22" viewBox="0 0 14 22"><path d="M2 1l10 10L2 21" fill="none" stroke="currentColor" stroke-width="1.500"/></svg></div>`});

def('pr-lumetri',()=>`<style>:host{display:flex;flex-direction:column;width:249px;flex:none;background:#232323;position:relative;box-sizing:border-box;overflow:hidden}
.tabs{height:33px;display:flex;padding-left:10px;flex:none;padding-bottom:6px;box-sizing:border-box}
.sub{height:24px;display:flex;align-items:center;flex:none;background:#262626;border-bottom:1px solid #363636;box-sizing:border-box;padding-left:11px;color:#8a8a8a;white-space:nowrap;width:235px;font-size:12.800px}
.sub .a{width:97px;flex:none;letter-spacing:-.1px}.sub .b{display:flex;align-items:center;background:#1d1d1d;height:23px;flex:1;color:${BLUE};padding-left:1px}
.lk{display:flex;align-items:center;height:17px;margin-top:1px;padding-left:28px;flex:none;color:#7d8496;font-size:12px}
.lk pr-select{margin-left:8px;color:#b0b0b0}
.im{margin:14px 0 0 21px}
.wh{display:flex;margin:11px 0 0 23px;flex:none}
.ad{display:flex;align-items:center;height:31px;padding-left:10px;flex:none;color:#888;font-size:13.500px;margin-top:1px}.ad pr-icon{margin-right:5px}
.ln{height:2px;flex:none;border-bottom:1px solid #323232;box-sizing:border-box;margin-right:14px}
.side{position:absolute;right:0;top:674px;width:9px;height:58px;border-radius:3px 0 0 3px;border:1px solid #1a1e28;box-sizing:border-box;background:repeating-linear-gradient(#3a4454 0 2px,#2a3040 2px 4px)}
.side:after{content:"";position:absolute;left:2px;right:2px;bottom:4px;height:13px;background:repeating-linear-gradient(#63d89a 0 2px,transparent 2px 3px)}</style>
<div class="tabs"><pr-tab w="120" menu>Lumetri 颜色</pr-tab></div>
<div class="sub"><div class="a">主 * 源文件${sm('.mp4')}</div><div class="b">${ic('chevD',11)}<span style="margin-left:8px">序列 ${sm('01')} * 源文...</span></div></div>
<pr-lsec h="43">基本校正</pr-lsec>
<pr-lsec h="41" noline>创意</pr-lsec>
<div class="lk">Look<pr-select w="166" h="17" pad="8"><span>无</span></pr-select></div>
<div class="im"><pr-look></pr-look></div>
<pr-lslider label="强度" value="100.0" style="margin-top:6px"></pr-lslider>
<div class="ad">${ic('chevD',12)}调整</div>
<pr-lslider label="淡化胶片" value="0.0" pos="-1" style="margin-top:-1px"></pr-lslider>
<pr-lslider label="锐化" value="0.0"></pr-lslider>
<pr-lslider label="自然饱和度" value="0.0"></pr-lslider>
<pr-lslider label="饱和度" value="100.0"></pr-lslider>
<div class="wh"><pr-wheel label="阴影色彩"></pr-wheel><pr-wheel label="高光色彩"></pr-wheel></div>
<pr-lslider label="色彩平衡" value="0.0" style="margin-top:9px"></pr-lslider>
<div class="ln"></div>
<pr-lsec>曲线</pr-lsec><pr-lsec>色轮</pr-lsec><pr-lsec hsl>辅助</pr-lsec><pr-lsec noline>晕影</pr-lsec>
<div class="side"></div>`);

def('pr-app',()=>`<style>:host{display:flex;flex-direction:column;width:1919px;height:1078px;background:#121212;position:relative;overflow:hidden}
.main{display:flex;gap:4px;height:971px;margin-top:4px;flex:none}
.lc{display:flex;flex-direction:column;gap:4px;width:1666px;flex:none}
.r1{display:flex;gap:4px;height:565px;flex:none}.r2{display:flex;gap:4px;height:402px;flex:none}
.st{margin-top:2px;height:18px;background:#282828;display:flex;align-items:center;padding-left:1px;color:#888;flex:none}
.wm{position:absolute;left:1688px;top:1050px;font:15.800px "Liberation Sans",sans-serif;color:#b4b4b4;text-shadow:1px 1px 1px #000,0 0 1px #333;white-space:nowrap}</style>
<pr-titlebar></pr-titlebar><pr-workspaces></pr-workspaces>
<div class="main"><div class="lc"><div class="r1"><pr-effect-controls></pr-effect-controls><pr-program></pr-program></div>
<div class="r2"><pr-project></pr-project><pr-tools></pr-tools><pr-timeline></pr-timeline><pr-meter></pr-meter></div></div><pr-lumetri></pr-lumetri></div>
<div class="st">${ic('cloud',17)}</div><div class="wm">https://blog.csdn.net/hibernate7</div>`);
</script></body></html>
